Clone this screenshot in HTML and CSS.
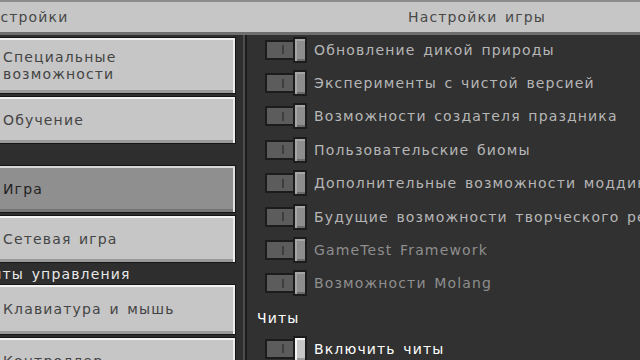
FILE: index.html
```html
<!DOCTYPE html>
<html lang="ru">
<head>
<meta charset="utf-8">
<title>Настройки игры</title>
<link rel="stylesheet" href="styles.css">
</head>
<body>
<header class="top">
  <div class="top-left"><span class="title-left">Настройки</span></div>
  <div class="top-right">Настройки игры</div>
</header>
<div class="main">
  <nav class="nav">
    <div class="btn btn-tall"><span>Специальные<br>возможности</span></div>
    <div class="btn"><span>Обучение</span></div>
    <div class="spacer"></div>
    <div class="btn btn-active"><span>Игра</span></div>
    <div class="btn"><span>Сетевая игра</span></div>
    <div class="nav-label"><span class="nav-label-text">Элементы управления</span></div>
    <div class="btn btn-kbd"><span>Клавиатура и мышь</span></div>
    <div class="btn"><span>Контроллер</span></div>
  </nav>
  <div class="divider"></div>
  <section class="panel">
    <div class="rows">
      <div class="row"><div class="toggle"><div class="track"><i class="notch"></i></div><div class="knob"></div></div><span class="label">Обновление дикой природы</span></div>
      <div class="row"><div class="toggle"><div class="track"><i class="notch"></i></div><div class="knob"></div></div><span class="label">Эксперименты с чистой версией</span></div>
      <div class="row"><div class="toggle"><div class="track"><i class="notch"></i></div><div class="knob"></div></div><span class="label">Возможности создателя праздника</span></div>
      <div class="row"><div class="toggle"><div class="track"><i class="notch"></i></div><div class="knob"></div></div><span class="label">Пользовательские биомы</span></div>
      <div class="row"><div class="toggle"><div class="track"><i class="notch"></i></div><div class="knob"></div></div><span class="label">Дополнительные возможности моддинга</span></div>
      <div class="row"><div class="toggle"><div class="track"><i class="notch"></i></div><div class="knob"></div></div><span class="label">Будущие возможности творческого режима</span></div>
      <div class="row"><div class="toggle"><div class="track"><i class="notch"></i></div><div class="knob"></div></div><span class="label label-dim">GameTest Framework</span></div>
      <div class="row"><div class="toggle"><div class="track"><i class="notch"></i></div><div class="knob"></div></div><span class="label label-dim">Возможности Molang</span></div>
    </div>
    <div class="section-head">Читы</div>
    <div class="row row-last"><div class="toggle"><div class="track"><i class="notch"></i></div><div class="knob knob-on"></div></div><span class="label label-on">Включить читы</span></div>
  </section>
</div>
</body>
</html>
```

FILE: styles.css
```css
html, body {
  margin: 0;
  padding: 0;
}
body {
  width: 640px;
  height: 360px;
  overflow: hidden;
  background: #313131;
  font-family: "DejaVu Sans", "Noto Sans", sans-serif;
  font-size: 14px;
  letter-spacing: 1.15px;
  word-spacing: 2px;
  white-space: nowrap;
}
.top {
  display: flex;
  height: 30px;
  background: #c6c6c6;
  border-top: 2px solid #8b8b8b;
  border-bottom: 3px solid #6e6e6e;
  color: #484848;
  align-items: center;
}
.top-left {
  width: 247px;
  overflow: hidden;
}
.title-left {
  display: inline-block;
  margin-left: -21px;
}
.top-right {
  padding-left: 161px;
}
.main {
  display: flex;
  height: 325px;
}
.nav {
  width: 243px;
  flex: none;
  overflow: hidden;
  background: #2e2e2e;
  display: flex;
  flex-direction: column;
  gap: 2px;
  padding-top: 2px;
}
.btn {
  flex: none;
  box-sizing: border-box;
  width: 249px;
  height: 48px;
  margin-left: -13px;
  padding-left: 15px;
  display: flex;
  align-items: center;
  background: #c6c6c6;
  border: 1px solid #161616;
  box-shadow: inset 0 2px #f2f2f2, inset -2px 0 #ececec, inset 0 -3px #9a9a9a;
  color: #444444;
  line-height: 17px;
}
.btn-tall {
  height: 57px;
}
.btn-kbd {
  height: 51px;
}
.btn-active {
  background: #8f8f8f;
  color: #222222;
  box-shadow: inset 0 2px #d8d8d8, inset -2px 0 #e0e0e0, inset 0 -3px #767676;
}
.spacer {
  flex: none;
  height: 17px;
}
.nav-label {
  flex: none;
  height: 17px;
  display: flex;
  align-items: center;
  color: #e8e8e8;
  overflow: hidden;
}
.nav-label-text {
  display: inline-block;
  margin-left: -60px;
}
.divider {
  flex: none;
  width: 4px;
  background: linear-gradient(to right, #4c4c4c 0 2px, #1a1a1a 2px 4px);
}
.panel {
  flex: 1;
  overflow: hidden;
  background: #313131;
}
.rows {
  margin-top: -2px;
}
.row {
  height: 33.4px;
  display: flex;
  align-items: center;
  padding-left: 18px;
}
.row-last {
  margin-top: -2px;
}
.toggle {
  flex: none;
  display: flex;
  align-items: center;
  height: 26px;
  margin-right: 7px;
}
.track {
  box-sizing: border-box;
  width: 28px;
  height: 20px;
  background: #5c5c5c;
  border: 2px solid #1c1c1c;
  border-right: none;
  display: flex;
  align-items: center;
  justify-content: flex-end;
  padding-right: 9px;
}
.notch {
  display: block;
  width: 2px;
  height: 9px;
  background: #3e3e3e;
}
.knob {
  box-sizing: border-box;
  width: 14px;
  height: 26px;
  background: #8e8e8e;
  border: 2px solid #1c1c1c;
  box-shadow: inset 2px 2px #a6a6a6, inset 0 -2px #6a6a6a;
}
.knob-on {
  background: #c6c6c6;
  box-shadow: inset 2px 2px #f4f4f4, inset 0 -2px #9a9a9a;
}
.label {
  color: #b6b6b6;
}
.label-dim {
  color: #8e8e8e;
}
.label-on {
  color: #ffffff;
}
.section-head {
  height: 34px;
  display: flex;
  align-items: center;
  padding-left: 10px;
  padding-top: 2px;
  box-sizing: border-box;
  color: #ffffff;
}
```
